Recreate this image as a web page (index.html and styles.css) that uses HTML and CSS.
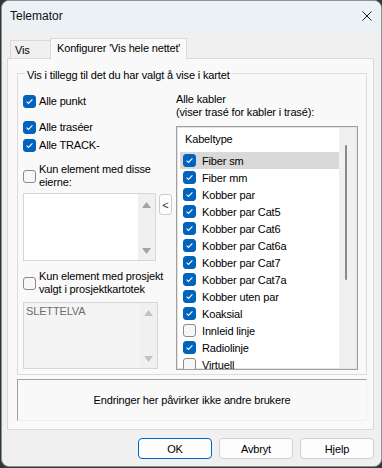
FILE: index.html
```html
<!DOCTYPE html>
<html lang="no">
<head>
    <meta charset="UTF-8">
    <meta name="viewport" content="width=device-width, initial-scale=1.0">
    <title>Telemator</title>
    <link rel="stylesheet" href="styles.css">
</head>
<body>
    <div class="window">
        <!-- Title bar -->
        <div class="titlebar">
            <span class="title">Telemator</span>
            <svg class="close" width="10" height="10" viewBox="0 0 10 10"><path d="M0.5 0.5L9.5 9.5M9.5 0.5L0.5 9.5" stroke="#1a1a1a" stroke-width="1"/></svg>
        </div>

        <div class="client">
            <!-- Tabs -->
            <div class="tabs">
                <div class="tab">Vis</div>
                <div class="tab active">Konfigurer 'Vis hele nettet'</div>
            </div>

            <div class="panel">
                <div class="group">
                    <span class="group-label">Vis i tillegg til det du har valgt å vise i kartet</span>

                    <!-- Left column -->
                    <div class="col-left">
                        <label class="check row-punkt"><span class="cb on"><svg viewBox="0 0 11 11"><path d="M2.6 5.6L4.5 7.4L8.4 3.4"/></svg></span>Alle punkt</label>
                        <label class="check row-trase"><span class="cb on"><svg viewBox="0 0 11 11"><path d="M2.6 5.6L4.5 7.4L8.4 3.4"/></svg></span>Alle traséer</label>
                        <label class="check row-track"><span class="cb on"><svg viewBox="0 0 11 11"><path d="M2.6 5.6L4.5 7.4L8.4 3.4"/></svg></span>Alle TRACK-</label>
                        <label class="check multi row-eiere"><span class="cb"></span><span>Kun element med disse<br>eierne:</span></label>

                        <div class="owner-row">
                            <div class="listbox owners">
                                <div class="items"></div>
                                <div class="vscroll">
                                    <svg width="9" height="6" viewBox="0 0 9 6"><path d="M4.5 0L9 6H0Z"/></svg>
                                    <svg width="9" height="6" viewBox="0 0 9 6"><path d="M0 0H9L4.5 6Z"/></svg>
                                </div>
                            </div>
                            <button type="button" class="small-btn">&lt;</button>
                        </div>

                        <label class="check multi row-prosjekt"><span class="cb"></span><span>Kun element med prosjekt<br>valgt i prosjektkartotek</span></label>

                        <div class="listbox projects">
                            <div class="items">SLETTELVA</div>
                            <div class="vscroll">
                                <svg width="9" height="6" viewBox="0 0 9 6"><path d="M4.5 0L9 6H0Z"/></svg>
                                <svg width="9" height="6" viewBox="0 0 9 6"><path d="M0 0H9L4.5 6Z"/></svg>
                            </div>
                        </div>
                    </div>

                    <!-- Right column -->
                    <div class="col-right">
                        <div class="cable-caption">Alle kabler<br>(viser trasé for kabler i trasé):</div>
                        <div class="cable-list">
                            <div class="cable-items">
                                <div class="cable-head">Kabeltype</div>
                                <div class="cable-row selected"><span class="cb on"><svg viewBox="0 0 11 11"><path d="M2.6 5.6L4.5 7.4L8.4 3.4"/></svg></span>Fiber sm</div>
                                <div class="cable-row"><span class="cb on"><svg viewBox="0 0 11 11"><path d="M2.6 5.6L4.5 7.4L8.4 3.4"/></svg></span>Fiber mm</div>
                                <div class="cable-row"><span class="cb on"><svg viewBox="0 0 11 11"><path d="M2.6 5.6L4.5 7.4L8.4 3.4"/></svg></span>Kobber par</div>
                                <div class="cable-row"><span class="cb on"><svg viewBox="0 0 11 11"><path d="M2.6 5.6L4.5 7.4L8.4 3.4"/></svg></span>Kobber par Cat5</div>
                                <div class="cable-row"><span class="cb on"><svg viewBox="0 0 11 11"><path d="M2.6 5.6L4.5 7.4L8.4 3.4"/></svg></span>Kobber par Cat6</div>
                                <div class="cable-row"><span class="cb on"><svg viewBox="0 0 11 11"><path d="M2.6 5.6L4.5 7.4L8.4 3.4"/></svg></span>Kobber par Cat6a</div>
                                <div class="cable-row"><span class="cb on"><svg viewBox="0 0 11 11"><path d="M2.6 5.6L4.5 7.4L8.4 3.4"/></svg></span>Kobber par Cat7</div>
                                <div class="cable-row"><span class="cb on"><svg viewBox="0 0 11 11"><path d="M2.6 5.6L4.5 7.4L8.4 3.4"/></svg></span>Kobber par Cat7a</div>
                                <div class="cable-row"><span class="cb on"><svg viewBox="0 0 11 11"><path d="M2.6 5.6L4.5 7.4L8.4 3.4"/></svg></span>Kobber uten par</div>
                                <div class="cable-row"><span class="cb on"><svg viewBox="0 0 11 11"><path d="M2.6 5.6L4.5 7.4L8.4 3.4"/></svg></span>Koaksial</div>
                                <div class="cable-row"><span class="cb"></span>Innleid linje</div>
                                <div class="cable-row"><span class="cb on"><svg viewBox="0 0 11 11"><path d="M2.6 5.6L4.5 7.4L8.4 3.4"/></svg></span>Radiolinje</div>
                                <div class="cable-row"><span class="cb"></span>Virtuell</div>
                            </div>
                            <div class="cable-scroll"><div class="thumb"></div></div>
                        </div>
                    </div>
                </div>

                <div class="note">Endringer her påvirker ikke andre brukere</div>
            </div>

            <!-- Dialog buttons -->
            <div class="buttons">
                <button type="button" class="default">OK</button>
                <button type="button">Avbryt</button>
                <button type="button">Hjelp</button>
            </div>
        </div>
    </div>
</body>
</html>
```

FILE: styles.css
```css
body {
    margin: 0;
    background-color: #2e3b31;
    font-family: "Liberation Sans", Arial, sans-serif;
    font-size: 11px;
    letter-spacing: -0.15px;
    color: #000;
}

/* Window frame */
.window {
    box-sizing: border-box;
    width: 381px;
    height: 467px;
    margin-left: 1px;
    border: 1px solid #8c9196;
    border-radius: 8px;
    background-color: #f0f0f0;
    overflow: hidden;
    display: flex;
    flex-direction: column;
}

.titlebar {
    height: 30px;
    flex-shrink: 0;
    background-color: #eaf2f6;
    display: flex;
    align-items: center;
    justify-content: space-between;
    padding: 0 9px 0 8px;
}

.title {
    font-size: 12px;
    letter-spacing: 0;
    color: #111;
}

.client {
    flex-grow: 1;
    display: flex;
    flex-direction: column;
    padding: 0 7px 0 5px;
}

/* Tabs */
.tabs {
    display: flex;
    align-items: flex-end;
    height: 20px;
    margin-top: 7px;
    padding-left: 3px;
}

.tab {
    box-sizing: border-box;
    height: 18px;
    width: 41px;
    padding: 3px 0 0 4px;
    border: 1px solid #d9d9d9;
    border-bottom: none;
    background-color: #f0f0f0;
}

.tab.active {
    position: relative;
    z-index: 1;
    height: 21px;
    width: 137px;
    margin-left: -1px;
    margin-bottom: -1px;
    padding: 3px 0 0 6px;
    background-color: #f9f9f9;
}

.panel {
    box-sizing: border-box;
    height: 372px;
    border: 1px solid #d9d9d9;
    background-color: #f9f9f9;
    padding-top: 14px;
}

/* Group box */
.group {
    position: relative;
    box-sizing: border-box;
    height: 302px;
    margin: 0 6px 0 9px;
    border: 1px solid #dcdcdc;
    display: flex;
    gap: 4px;
    padding: 0 8px 0 5px;
}

.group-label {
    position: absolute;
    top: -5px;
    left: 7px;
    padding: 0 2px;
    line-height: 13px;
    background-color: #f9f9f9;
}

.col-left {
    width: 149px;
    display: flex;
    flex-direction: column;
}

.col-right {
    flex-grow: 1;
    display: flex;
    flex-direction: column;
}

.check {
    display: flex;
    align-items: center;
    gap: 3px;
    height: 13px;
    line-height: 13px;
}

.check.multi {
    height: 26px;
}

.row-punkt { margin-top: 21px; }
.row-trase { margin-top: 13px; }
.row-track { margin-top: 5px; }
.row-eiere { margin-top: 11px; }
.row-prosjekt { margin-top: 9px; }

/* Checkbox */
.cb {
    box-sizing: border-box;
    width: 13px;
    height: 13px;
    flex-shrink: 0;
    border: 1px solid #8a8a8a;
    border-radius: 3px;
    background-color: #f7f7f7;
}

.cb.on {
    border-color: #0063bd;
    background-color: #0063bd;
}

.cb svg {
    display: block;
    width: 11px;
    height: 11px;
}

.cb svg path {
    fill: none;
    stroke: #fff;
    stroke-width: 1.1;
}

/* List boxes */
.owner-row {
    display: flex;
    gap: 3px;
    margin-top: 4px;
}

.listbox {
    box-sizing: border-box;
    width: 135px;
    border: 1px solid #d6d6d6;
    background-color: #fff;
    display: flex;
}

.listbox .items {
    flex-grow: 1;
    padding: 2px 0 0 2px;
    line-height: 13px;
}

.vscroll {
    width: 17px;
    background-color: #f0f0f0;
    display: flex;
    flex-direction: column;
    justify-content: space-between;
    align-items: center;
}

.vscroll svg path {
    fill: #a3a3a3;
}

.owners {
    height: 68px;
}

.owners .vscroll {
    padding: 8px 0 6px;
}

.projects {
    height: 67px;
    margin-top: 6px;
    background-color: #f4f4f4;
    color: #6d6d6d;
}

.projects .vscroll {
    padding: 7px 0 6px;
}

.projects .vscroll svg path {
    fill: #c2c2c2;
}

.small-btn {
    box-sizing: border-box;
    width: 13px;
    height: 21px;
    margin-top: 1px;
    padding: 0;
    border: 1px solid #cccccc;
    border-radius: 3px;
    background-color: #fdfdfd;
    font-family: inherit;
    font-size: 11px;
    color: #333;
}

/* Cable list */
.cable-caption {
    margin-top: 19px;
    line-height: 13px;
}

.cable-list {
    box-sizing: border-box;
    height: 244px;
    margin-top: 7px;
    border: 1px solid #a0a0a0;
    box-shadow: inset 0 0 0 1px #e3e3e3;
    background-color: #fff;
    display: flex;
    overflow: hidden;
}

.cable-items {
    flex-grow: 1;
    padding: 0 0 0 3px;
}

.cable-head {
    height: 25px;
    line-height: 25px;
    padding-left: 5px;
}

.cable-row {
    height: 17px;
    display: flex;
    align-items: center;
    gap: 6px;
    padding-left: 3px;
}

.cable-row.selected {
    background-color: #d9d9d9;
}

.cable-scroll {
    position: relative;
    width: 17px;
    margin: 1px 1px 1px 0;
    background-color: #f0f0f0;
}

.cable-scroll .thumb {
    position: absolute;
    left: 6px;
    top: 17px;
    width: 2px;
    height: 135px;
    border-radius: 1px;
    background-color: #8a8a8a;
}

/* Info box under the group */
.note {
    box-sizing: border-box;
    height: 42px;
    margin: 4px 6px 0 9px;
    border-top: 1px solid #a0a0a0;
    border-left: 1px solid #a0a0a0;
    border-right: 1px solid #f0f0f0;
    border-bottom: 1px solid #f0f0f0;
    display: flex;
    align-items: center;
    justify-content: center;
}

/* Dialog buttons */
.buttons {
    display: flex;
    justify-content: flex-end;
    gap: 7px;
    margin-top: 8px;
}

.buttons button {
    box-sizing: border-box;
    width: 74px;
    height: 21px;
    border: 1px solid #d0d0d0;
    border-radius: 4px;
    background-color: #fdfdfd;
    font-family: inherit;
    font-size: 11px;
    letter-spacing: -0.15px;
    color: #000;
}

.buttons button.default {
    border-color: #0067c0;
}
```
